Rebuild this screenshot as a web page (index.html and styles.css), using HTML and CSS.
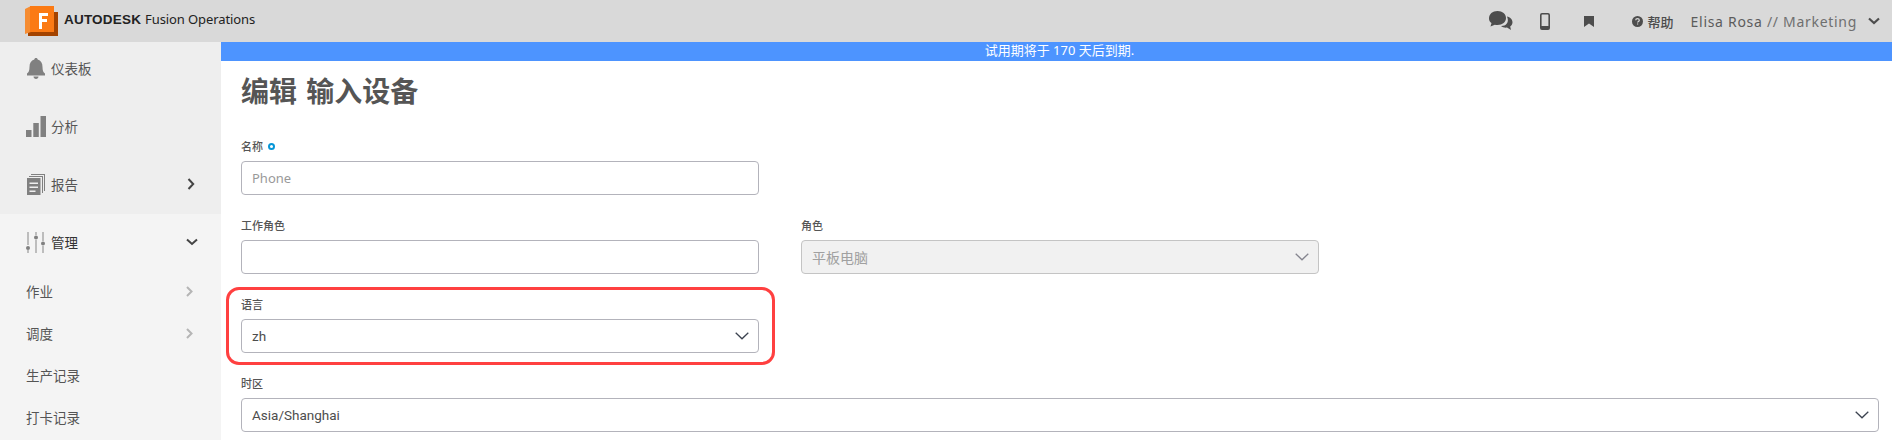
FILE: index.html
```html
<!DOCTYPE html>
<html lang="zh">
<head>
    <meta charset="UTF-8">
    <meta name="viewport" content="width=device-width, initial-scale=1.0">
    <title>编辑 输入设备</title>
    <link rel="stylesheet" href="styles.css">
</head>
<body>
    <header class="topbar">
        <div class="brand">
            <svg class="brand-logo" width="33" height="30" viewBox="0 0 33 30">
                <path d="M3 6h30v24H3z" fill="#a34300"/>
                <path d="M0 3 6 0v26l-6 2z" fill="#f58c32"/>
                <path d="M5 0h24v26H5z" fill="#fb7a14"/>
                <path d="M14 7h9v3h-6v3h5v3h-5v7h-3z" fill="#fff"/>
            </svg>
            <span class="brand-name">AUTODESK</span>
            <span class="brand-product">Fusion Operations</span>
        </div>
        <div class="topbar-tools">
            <svg class="tool-chat" width="24" height="20" viewBox="0 0 24 20">
                <path d="M0 7.500C0 3 3.500 0 8.500 0s8.500 3 8.500 7-3.500 7-8.500 7c-1 0-1.800 0-2.700-.3L1.500 15.500l1-3.400C1 11 0 9.500 0 7.500z" fill="#4d4d4d"/>
                <path d="M18 5.500c3 .5 5.500 3 5.500 5.800 0 1.800-1 3.300-2.300 4.300l.8 3.400-4-2.400c-2.200.3-4.500-.3-6-1.600 4.500.2 8.800-3 6-9.500z" fill="#4d4d4d"/>
            </svg>
            <svg class="tool-phone" width="10" height="17" viewBox="0 0 10 17">
                <path d="M2 .8h6c.7 0 1.200.5 1.200 1.200v13c0 .7-.5 1.200-1.200 1.200H2c-.7 0-1.200-.5-1.200-1.200V2C.8 1.300 1.300.8 2 .8z" fill="none" stroke="#4d4d4d" stroke-width="1.600"/>
                <path d="M1 13h8v3H1z" fill="#4d4d4d"/>
            </svg>
            <svg class="tool-mark" width="10" height="11" viewBox="0 0 10 11">
                <path d="M0 0h10v11L5 7.500 0 11z" fill="#4d4d4d"/>
            </svg>
            <span class="help">
                <svg width="11" height="11" viewBox="0 0 11 11">
                    <circle cx="5.500" cy="5.500" r="5.500" fill="#4d4d4d"/>
                    <path d="M3.700 4.300c0-1 .8-1.600 1.800-1.600s1.800.6 1.800 1.500c0 1.200-1.700 1.200-1.700 2.300" fill="none" stroke="#d9d9d9" stroke-width="1.200"/>
                    <path d="M5 7.400h1.200v1.200H5z" fill="#d9d9d9"/>
                </svg>
                帮助
            </span>
            <span class="user">Elisa Rosa <span class="user-sep">// Marketing</span></span>
            <svg class="user-caret" width="12" height="8" viewBox="0 0 12 8">
                <path d="M1 1.500 6 6l5-4.500" fill="none" stroke="#4d4d4d" stroke-width="2.200"/>
            </svg>
        </div>
    </header>

    <div class="page">
        <nav class="sidebar">
            <div class="nav-top">
                <a class="nav-item">
                    <svg width="20" height="21" viewBox="0 0 20 21">
                        <path d="M10 0c1 0 1.700.7 1.700 1.500C15 2.500 16.500 5 16.500 9c0 3.500.8 5.500 2.500 6.500V17.500H1v-2C2.700 14.500 3.500 12.500 3.500 9c0-4 1.500-6.500 4.800-7.500C8.300.7 9 0 10 0z" fill="#808080"/>
                        <path d="M7.500 18.500h5C12.500 20 11.300 21 10 21s-2.500-1-2.500-2.500z" fill="#808080"/>
                    </svg>
                    <span>仪表板</span>
                </a>
                <a class="nav-item">
                    <svg width="20" height="21" viewBox="0 0 20 21">
                        <path d="M0 14h5.500v7H0zM7.300 7h5.500v14H7.300zM14.500 0H20v21h-5.500z" fill="#808080"/>
                    </svg>
                    <span>分析</span>
                </a>
                <a class="nav-item">
                    <svg width="20" height="21" viewBox="0 0 20 21">
                        <path d="M5 0h14v17h-1V1H5z" fill="#808080"/>
                        <path d="M3 2h14v17h-1V3H3z" fill="#808080"/>
                        <path d="M1 4h13.500v17H1zM3.500 8.500V10h8.500V8.500zm0 4V14h8.500v-1.500zm0 4V18h6v-1.500z" fill="#808080" fill-rule="evenodd"/>
                    </svg>
                    <span>报告</span>
                    <svg class="nav-caret" width="8" height="12" viewBox="0 0 8 12">
                        <path d="M1.500 1 6.200 6l-4.700 5" fill="none" stroke="#444" stroke-width="2"/>
                    </svg>
                </a>
            </div>
            <div class="nav-group">
                <a class="nav-item nav-active">
                    <svg width="20" height="21" viewBox="0 0 20 21">
                        <path d="M2 0v13M2 18v3M10 0v3M10 8v13M17 0v9M17 14v7" stroke="#aaa" stroke-width="1.500" fill="none"/>
                        <circle cx="2" cy="16" r="2" fill="#808080"/>
                        <circle cx="10" cy="5.500" r="2" fill="#808080"/>
                        <circle cx="17" cy="11.500" r="2" fill="#808080"/>
                    </svg>
                    <span>管理</span>
                    <svg class="nav-caret-down" width="12" height="8" viewBox="0 0 12 8">
                        <path d="M1 1.500 6 6l5-4.500" fill="none" stroke="#444" stroke-width="2"/>
                    </svg>
                </a>
                <a class="nav-sub">作业
                    <svg width="7" height="11" viewBox="0 0 7 11"><path d="M1 1l4.500 4.500L1 10" fill="none" stroke="#b5b5b5" stroke-width="2"/></svg>
                </a>
                <a class="nav-sub">调度
                    <svg width="7" height="11" viewBox="0 0 7 11"><path d="M1 1l4.500 4.500L1 10" fill="none" stroke="#b5b5b5" stroke-width="2"/></svg>
                </a>
                <a class="nav-sub">生产记录</a>
                <a class="nav-sub">打卡记录</a>
            </div>
        </nav>

        <main class="content">
            <div class="notice">试用期将于 170 天后到期.</div>
            <h1 class="title">编辑 输入设备</h1>
            <form class="form">
                <div class="field">
                    <label>名称 <i class="required"></i></label>
                    <input class="control" type="text" placeholder="Phone">
                </div>
                <div class="field new-row">
                    <label>工作角色</label>
                    <input class="control" type="text">
                </div>
                <div class="field">
                    <label>角色</label>
                    <div class="control select disabled">
                        <span>平板电脑</span>
                        <svg width="14" height="8" viewBox="0 0 14 8"><path d="M.7.7 7 6.800 13.300.7" fill="none" stroke="#85858f" stroke-width="1.300"/></svg>
                    </div>
                </div>
                <div class="field new-row highlighted">
                    <label>语言</label>
                    <div class="control select">
                        <span>zh</span>
                        <svg width="14" height="8" viewBox="0 0 14 8"><path d="M.7.7 7 6.800 13.300.7" fill="none" stroke="#3c4350" stroke-width="1.300"/></svg>
                    </div>
                </div>
                <div class="field wide">
                    <label>时区</label>
                    <div class="control select">
                        <span>Asia/Shanghai</span>
                        <svg width="14" height="8" viewBox="0 0 14 8"><path d="M.7.7 7 6.800 13.300.7" fill="none" stroke="#3c4350" stroke-width="1.300"/></svg>
                    </div>
                </div>
            </form>
        </main>
    </div>
</body>
</html>
```

FILE: styles.css
```css
html, body {
    height: 440px;
    overflow: hidden;
}

body {
    margin: 0;
    background-color: white;
    color: #4d4d4d;
    font-family: "Noto Sans", "Noto Sans CJK SC", sans-serif;
}

.topbar {
    display: flex;
    align-items: center;
    justify-content: space-between;
    height: 42px;
    padding: 0 12px 0 25px;
    background-color: #d9d9d9;
}

.brand {
    display: flex;
    align-items: center;
    color: #222;
}

.brand-logo {
    margin: 0 6px 0 0;
}

.brand-name {
    font-family: "Liberation Sans", sans-serif;
    font-size: 13.5px;
    font-weight: bold;
    letter-spacing: 0.2px;
    margin: 0 4px 4px 0;
}

.brand-product {
    font-size: 13px;
    letter-spacing: -0.1px;
    margin-bottom: 4px;
}

.topbar-tools {
    display: flex;
    align-items: center;
}

.tool-chat {
    margin-right: 27px;
}

.tool-phone {
    margin-right: 34px;
}

.tool-mark {
    margin-right: 38px;
}

.help {
    display: flex;
    align-items: center;
    gap: 5px;
    font-size: 13px;
    font-weight: 500;
    margin-right: 17px;
}

.user {
    font-size: 14px;
    letter-spacing: 0.7px;
    color: #5c5c5c;
    margin-right: 11px;
}

.user-sep {
    color: #6f6f6f;
}

.page {
    display: flex;
    height: 398px;
}

.sidebar {
    width: 221px;
    flex-shrink: 0;
    background-color: #f4f4f4;
}

.nav-top {
    height: 172px;
    background-color: #eeeeee;
}

.nav-item {
    display: flex;
    align-items: center;
    gap: 5px;
    height: 52px;
    margin-bottom: 6px;
    padding: 0 26px;
    box-sizing: border-box;
    font-size: 13.5px;
    color: #555;
}

.nav-caret {
    margin-left: auto;
}

.nav-caret-down {
    margin: 0 -3px 0 auto;
}

.nav-group {
    padding-top: 2px;
}

.nav-active {
    margin-bottom: 2px;
    color: #333;
}

.nav-sub {
    display: flex;
    align-items: center;
    justify-content: space-between;
    height: 42px;
    padding: 0 28px 0 26px;
    font-size: 13.5px;
    color: #555;
}

.content {
    flex: 1;
    min-width: 0;
}

.notice {
    height: 19px;
    padding-left: 6px;
    background-color: #4d94ff;
    color: white;
    font-size: 13px;
    line-height: 17px;
    text-align: center;
}

.title {
    margin: 0;
    padding: 14px 20px 0;
    height: 49px;
    font-size: 28px;
    font-weight: bold;
    line-height: 32px;
    word-spacing: 2px;
    color: #555;
}

.form {
    display: grid;
    grid-template-columns: 518px 518px 1fr;
    column-gap: 42px;
    row-gap: 21px;
    padding: 13px 13px 0 20px;
}

.new-row {
    grid-column: 1;
}

.wide {
    grid-column: 1 / -1;
}

.field label {
    display: flex;
    align-items: center;
    gap: 5px;
    height: 18px;
    margin-bottom: 6px;
    font-size: 11px;
    font-weight: 500;
    color: #555;
}

.required {
    width: 3px;
    height: 3px;
    border: 2px solid #0696d7;
    border-radius: 50%;
}

.control {
    display: block;
    width: 100%;
    height: 34px;
    padding: 0 10px;
    box-sizing: border-box;
    background-color: white;
    border: 1px solid #b3b3bb;
    border-radius: 4px;
    font-family: Roboto, "Noto Sans CJK SC", sans-serif;
    font-size: 13.5px;
    color: #4d4d4d;
}

input.control::placeholder {
    font-family: "Noto Sans", sans-serif;
    font-size: 13px;
    color: #999;
}

.select {
    display: flex;
    align-items: center;
    justify-content: space-between;
}

.select svg {
    margin-right: -1px;
}

.disabled {
    background-color: #f1f1f1;
    border-color: #c4c4c4;
    color: #a0a0a0;
    font-size: 14px;
}

/* red annotation from the screenshot, sits over the form */
.highlighted {
    position: relative;
}

.highlighted::after {
    content: "";
    position: absolute;
    top: -8px;
    left: -15px;
    right: -16px;
    bottom: -12px;
    border: 3px solid #ff4040;
    border-radius: 13px;
    pointer-events: none;
}
```
